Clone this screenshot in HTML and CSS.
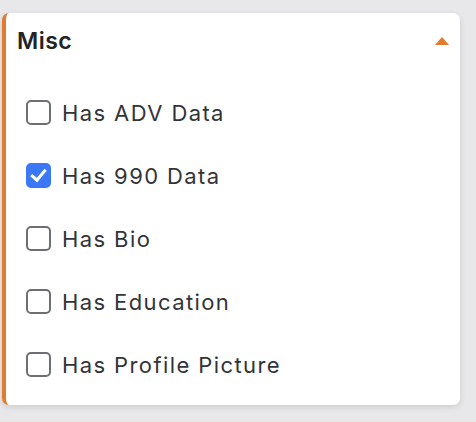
FILE: index.html
```html
<!DOCTYPE html>
<html>
<head>
<meta charset="utf-8">
<link rel="stylesheet" href="styles.css">
</head>
<body>
<div class="card">
  <div class="header">
    <span class="title">Misc</span>
    <span class="caret"></span>
  </div>
  <div class="list">
    <label class="row"><input type="checkbox" class="cb"><span>Has ADV Data</span></label>
    <label class="row"><input type="checkbox" class="cb" checked><span>Has 990 Data</span></label>
    <label class="row"><input type="checkbox" class="cb"><span>Has Bio</span></label>
    <label class="row"><input type="checkbox" class="cb"><span>Has Education</span></label>
    <label class="row"><input type="checkbox" class="cb"><span>Has Profile Picture</span></label>
  </div>
</div>
</body>
</html>
```
FILE: styles.css
```css
html, body {
  margin: 0;
  padding: 0;
}
body {
  background: #e8e8ea;
  font-family: "Inter", "Liberation Sans", sans-serif;
  width: 476px;
  height: 422px;
  overflow: hidden;
}
.card {
  margin: 13px 0 0 2px;
  width: 458px;
  height: 392px;
  box-sizing: border-box;
  background: #fff;
  border-left: 4px solid #e07b2f;
  border-radius: 7px;
  box-shadow: 0 2px 6px rgba(0,0,0,0.12);
  display: flex;
  flex-direction: column;
}
.header {
  height: 56px;
  display: flex;
  align-items: center;
  justify-content: space-between;
  padding: 0 11px 0 11px;
}
.title {
  font-size: 23px;
  font-weight: 600;
  letter-spacing: 0.5px;
  color: #222327;
}
.caret {
  width: 0;
  height: 0;
  border-left: 7px solid transparent;
  border-right: 7px solid transparent;
  border-bottom: 8px solid #e07b2f;
}
.list {
  padding-top: 12px;
  display: flex;
  flex-direction: column;
}
.row {
  height: 63px;
  display: flex;
  align-items: center;
  padding-left: 20px;
  gap: 11px;
  font-size: 22px;
  letter-spacing: 1.4px;
  color: #333438;
}
.cb {
  appearance: none;
  -webkit-appearance: none;
  margin: 0;
  width: 25px;
  height: 25px;
  box-sizing: border-box;
  border: 2px solid #6f6f73;
  border-radius: 5px;
  background: #fff;
  position: relative;
}
.cb:checked {
  background: #3b78f5;
  border-color: #3b78f5;
}
.cb:checked::after {
  content: "";
  position: absolute;
  left: 6px;
  top: 1px;
  width: 6px;
  height: 12px;
  border-right: 3.5px solid #fff;
  border-bottom: 3.5px solid #fff;
  transform: rotate(40deg);
}
```
